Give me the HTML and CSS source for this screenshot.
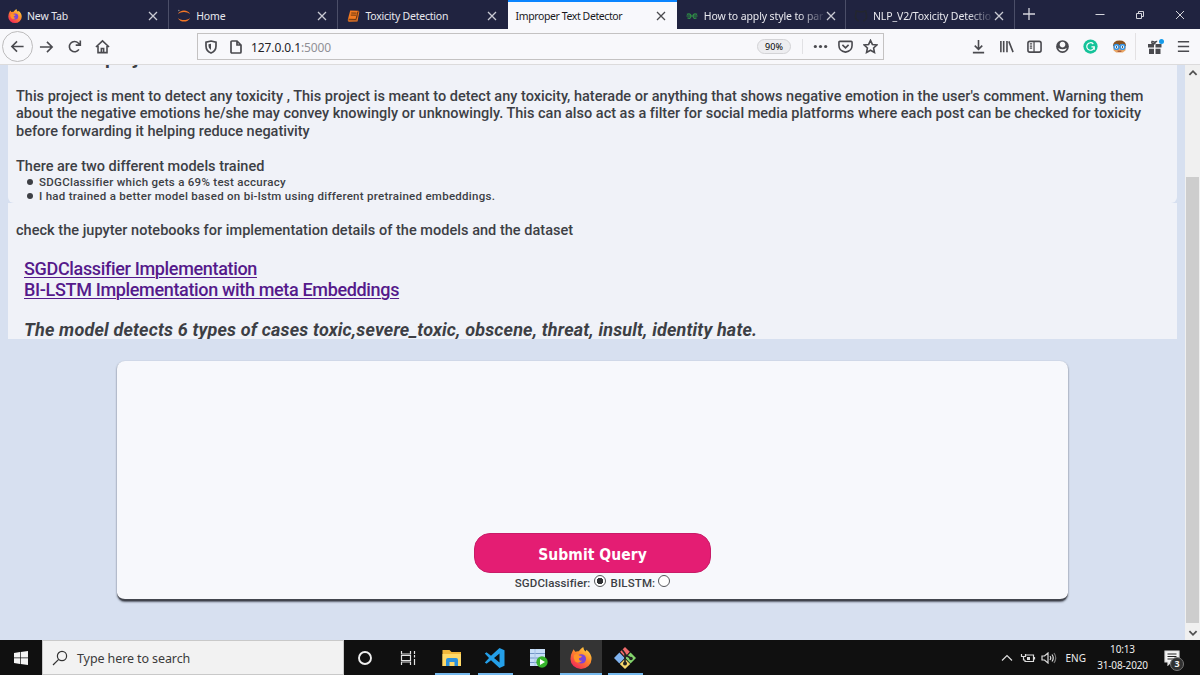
FILE: index.html
```html
<!DOCTYPE html>
<html lang="en">
<head>
<meta charset="utf-8">
<title>Improper Text Detector</title>
<link rel="stylesheet" href="styles.css">
</head>
<body>
<svg class="defs" width="0" height="0">
  <defs>
    <symbol id="close" viewBox="0 0 10 10"><path d="M1 1l8 8M9 1l-8 8" fill="none" stroke="currentColor" stroke-width="1.3"/></symbol>
    <linearGradient id="flame" x1=".9" y1="0" x2=".2" y2="1"><stop offset="0" stop-color="#ffe04a"/><stop offset=".45" stop-color="#ff8a2a"/><stop offset="1" stop-color="#f0205c"/></linearGradient>
    <symbol id="firefox" viewBox="0 0 20 20">
      <path d="M2 4.5L3.2 2l1.6 2.4Q6.2 3.6 8 3.8 9.5 1.7 12 0q.2 2.6 2.3 4l.7-1.6Q19.7 6 19.6 11A9.6 9 0 0 1 .4 11Q.2 7.500 2 4.500z" fill="url(#flame)"/>
      <circle cx="10.300" cy="10.800" r="4.300" fill="#7a45d8"/>
      <path d="M3.500 7.200q3-2 4.800.5l2.600.4q-.4 1.800-2.700 2.100-.5 2.600 3 2.300-4 3.200-6.700.4-1.800-2.200-1-5.700z" fill="#ff9328"/>
    </symbol>
  </defs>
</svg>

<div class="tabs">
  <div class="tab"><svg class="fav" viewBox="0 0 20 20"><use href="#firefox"/></svg><span class="tab-label">New Tab</span><svg class="x"><use href="#close"/></svg></div>
  <div class="tab"><svg class="fav" viewBox="0 0 15 15"><path d="M1 5.400C3 .2 12 .2 14 5.400 10.500 2.500 4.500 2.500 1 5.400zM1 9.600c2 5.200 11 5.200 13 0-3.500 2.900-9.500 2.900-13 0z" fill="#f37726"/><circle cx="2" cy="1.600" r=".7" fill="#999"/></svg><span class="tab-label">Home</span><svg class="x"><use href="#close"/></svg></div>
  <div class="tab"><svg class="fav" viewBox="0 0 15 15"><path d="M4.500 1.500l9 .3-2.200 10.400-9.500-.2z" fill="#f37a20"/><path d="M1.800 12l9.500.2 2.200-10 .8.800-2 10.500-9.500.2z" fill="#f37a20"/><path d="M5.600 4.300l5.600.1M5.100 6.500l5.600.1M2.700 11l8 .2 2-8.500" stroke="#60300f" fill="none"/></svg><span class="tab-label">Toxicity Detection</span><svg class="x"><use href="#close"/></svg></div>
  <div class="tab active"><span class="tab-label">Improper Text Detector</span><svg class="x"><use href="#close"/></svg></div>
  <div class="tab"><svg class="fav" viewBox="0 0 15 15"><path d="M2 5.800q4-1.500 4.500 1.700Q6 11 2.700 9.500M1.500 7.500h12M13 5.800q-4-1.500-4.500 1.700Q9 11 12.300 9.500" fill="none" stroke="#2f8d46" stroke-width="1.300"/></svg><span class="tab-label">How to apply style to par</span><svg class="x"><use href="#close"/></svg></div>
  <div class="tab"><svg class="fav" viewBox="0 0 15 15"><path d="M5 13q-3.500-1.500-3.500-5.500L2.500 2l3 1h4l3-1 1 5.500q0 4-3.500 5.500" fill="none" stroke="#23262f" stroke-width="1.600"/></svg><span class="tab-label">NLP_V2/Toxicity Detectio</span><svg class="x"><use href="#close"/></svg></div>
  <svg class="plus" viewBox="0 0 14 14"><path d="M7 1v12M1 7h12" stroke="#d5d5dc" stroke-width="1.300"/></svg>
  <div class="window-buttons">
    <svg viewBox="0 0 10 10"><path d="M.5 4.500h9" stroke="#d5d5dc"/></svg>
    <svg viewBox="0 0 10 10"><path d="M1.500 3.500h5v5h-5zM3.500 3.500v-2h5v5h-2" fill="none" stroke="#d5d5dc"/></svg>
    <svg viewBox="0 0 10 10"><path d="M1 1l8 8M9 1l-8 8" stroke="#d5d5dc"/></svg>
  </div>
</div>

<div class="toolbar">
  <div class="nav">
    <span class="back"><svg viewBox="0 0 16 16"><path d="M14.500 8H2M7.500 2.500L2 8l5.500 5.500"/></svg></span>
    <svg viewBox="0 0 16 16"><path d="M1 8.500h13M8.500 3L14 8.500 8.500 14"/></svg>
    <svg viewBox="0 0 16 16"><path d="M12.700 11A5.500 5.500 0 1 1 12 4.300L14 6.300M14.200 1.500v5H9.300"/></svg>
    <svg viewBox="0 0 16 16"><path d="M1 8.500L8 2l7 6.500M3.200 7.500v7h9.600v-7M6.800 14v-3.800h2.400V14"/></svg>
  </div>
  <div class="address">
    <svg class="shield" viewBox="0 0 14 14"><path d="M7 1l5 1.200V6q0 5-5 7-5-2-5-7V2.200z"/><path d="M7 3.700V10Q4.500 8.500 4.500 6V4.300z" fill="#4a4a4f" stroke="none"/></svg>
    <svg class="doc" viewBox="0 0 14 14"><path d="M2 2q0-1 1-1h5l4 4v7q0 1-1 1H3q-1 0-1-1zM8 1v4h4"/></svg>
    <span class="url">127.0.0.1<i>:5000</i></span>
    <span class="zoom">90%</span>
    <span class="page-actions">
      <svg viewBox="0 0 16 16"><g fill="#4a4a4f" stroke="none"><circle cx="2.500" cy="8" r="1.700"/><circle cx="8" cy="8" r="1.700"/><circle cx="13.500" cy="8" r="1.700"/></g></svg>
      <svg viewBox="0 0 16 16"><path d="M2 2.500h12q1 0 1 1V7q0 6-7 7-7-1-7-7V3.500q0-1 1-1zM4.700 6.300L8 9.500l3.300-3.200"/></svg>
      <svg viewBox="0 0 16 16"><path d="M8 1.500l2 4.300 4.700.6-3.400 3.200.9 4.700L8 12l-4.200 2.300.9-4.700L1.300 6.400 6 5.800z"/></svg>
    </span>
  </div>
  <div class="tools">
    <svg viewBox="0 0 16 16"><path d="M8 1v9.500M4 7l4 4 4-4M2 14.500h12"/></svg>
    <svg viewBox="0 0 16 16"><path d="M2 2v12M5 2v12M8.500 2v12M10.500 2.500L15 14"/></svg>
    <svg viewBox="0 0 16 16"><rect x="1" y="2.500" width="14" height="11.500" rx="2"/><path d="M7.500 2.500V14M3 5.200h2.500M3 7.500h2.500M3 9.800h2.500" stroke-width="1.300"/></svg>
    <svg viewBox="0 0 16 16"><circle cx="8" cy="8" r="6.800" fill="#4a4a4f" stroke="none"/><path d="M8 3a3 3 0 0 1 2.800 4.200q-.8 1.800-2.800 1.800t-2.800-1.800A3 3 0 0 1 8 3z" fill="#f8f8fa" stroke="none"/><path d="M3.500 9.500q4.500 3 9 0-1 3.500-4.500 3.500t-4.500-3.500z" fill="#f8f8fa" stroke="none"/></svg>
    <svg viewBox="0 0 16 16"><circle cx="8" cy="8" r="7.600" fill="#15c39a" stroke="none"/><path d="M11 5.300a4 4 0 1 0 1 3.200H9M12 8.500v3" stroke="#fff" stroke-width="1.300"/></svg>
    <svg viewBox="0 0 16 16"><g stroke="none"><path d="M1.500 7h13v5l-3 2.500h-7l-3-2.500z" fill="#e9a564"/><path d="M1 7.500Q1 1.500 8 1.500t7 6q-3 0-5-2-4 3-9 2z" fill="#8b521e"/></g><circle cx="4.800" cy="8.500" r="2.600" fill="#d9f0ff" stroke="#3592e3" stroke-width="1.500"/><circle cx="11.200" cy="8.500" r="2.600" fill="#d9f0ff" stroke="#3592e3" stroke-width="1.500"/><path d="M4.300 8.500h1M10.700 8.500h1" stroke="#222"/><path d="M6 13h4" stroke="#8c3528" stroke-width="1"/></svg>
    <div class="gift"><svg viewBox="0 0 17 16"><path d="M1 5h6v3.500H1zM8.500 5h6v3.500h-6zM2 9.800h5V15H2zM8.500 9.800h5V15h-5z" fill="#4a4a4f" stroke="none"/><path d="M7.700 5Q4 5 5 2.500 7.500 2 7.700 5q.3-3 2.500-2.500" stroke-width="1.500"/><circle cx="14.500" cy="2.500" r="2.500" fill="#159bea" stroke="none"/></svg></div>
    <svg viewBox="0 0 16 16"><path d="M2 3h12M2 8h12M2 13h12"/></svg>
  </div>
</div>

<div class="viewport">
  <main class="page">
    <section class="panel about">
      <h4 class="clipped">About the project</h4>
      <p><span class="l1">This project is ment to detect any toxicity , This project is meant to detect any toxicity, haterade or anything that shows negative emotion in the user's comment. Warning them</span><br><span class="l2">about the negative emotions he/she may convey knowingly or unknowingly. This can also act as a filter for social media platforms where each post can be checked for toxicity</span><br><span class="l3">before forwarding it helping reduce negativity</span></p>
      <p class="models">There are two different models trained</p>
      <ul>
        <li>SDGClassifier which gets a 69% test accuracy</li>
        <li>I had trained a better model based on bi-lstm using different pretrained embeddings.</li>
      </ul>
    </section>
    <section class="panel details">
      <p class="check">check the jupyter notebooks for implementation details of the models and the dataset</p>
      <div class="links"><a href="#">SGDClassifier Implementation</a><br><a href="#">BI-LSTM Implementation with meta Embeddings</a></div>
      <p class="cases">The model detects 6 types of cases toxic,severe_toxic, obscene, threat, insult, identity hate.</p>
    </section>
    <form class="card">
      <button type="button">Submit Query</button>
      <div class="choices"><span>SGDClassifier:</span><i class="radio on"></i><span>BILSTM:</span><i class="radio"></i></div>
    </form>
  </main>
  <div class="scrollbar">
    <svg viewBox="0 0 10 10"><path d="M2 6.500L5 3.500l3 3"/></svg>
    <div class="thumb"></div>
    <svg viewBox="0 0 10 10"><path d="M2 3.500l3 3 3-3"/></svg>
  </div>
</div>

<div class="taskbar">
  <div class="start"><svg viewBox="0 0 14 14"><path d="M0 2l6-1v5.600H0zM6.700.9L14 0v6.600H6.700zM0 7.300h6V13l-6-1zM6.700 7.300H14V14l-7.300-1z" fill="#f4f4f4"/></svg></div>
  <div class="search"><svg viewBox="0 0 16 16"><circle cx="10" cy="6" r="4.600"/><path d="M6.700 9.300L1 15"/></svg><span>Type here to search</span></div>
  <div class="apps">
    <div class="app"><svg viewBox="0 0 22 22"><circle cx="11" cy="11" r="6" fill="none" stroke="#eee" stroke-width="1.900"/></svg></div>
    <div class="app"><svg viewBox="0 0 22 22"><path d="M4.500 4v3h9V4M4.500 18v-3h9v3M4.500 8.500h9v5h-9zM17.500 4v3M17.500 12v6M17.500 8v2.500" fill="none" stroke="#e4e4e4" stroke-width="1.200"/></svg></div>
    <div class="app run"><svg viewBox="0 0 22 22"><path d="M1.500 3h7l2 2H20v14H1.500z" fill="#f1b73b"/><path d="M1.500 7H20v12H1.500z" fill="#ffd968"/><path d="M5 19v-6q0-2 2-2h8q2 0 2 2v6h-3.500v-4h-5v4z" fill="#2c91dd"/></svg></div>
    <div class="app run"><svg viewBox="0 0 22 22"><path d="M15.500 1l5 2.200v15.600L15.500 21 7 13.300l-4.500 3.500L.8 15.500 5 11 .8 6.500l1.700-1.300L7 8.700zM15.500 6.500L10 11l5.500 4.500z" fill="#249fe8" fill-rule="evenodd"/></svg></div>
    <div class="app"><svg viewBox="0 0 22 22"><path d="M3 2h15v17H3z" fill="#c7def7"/><path d="M3 6.500h15M3 11h15M3 15.500h15" stroke="#7296c6"/><path d="M8 2v17" stroke="#a5c2e6"/><circle cx="15" cy="15" r="5.700" fill="#35b32b"/><path d="M13 12l5 3-5 3z" fill="#fff"/></svg></div>
    <div class="app run current"><svg viewBox="0 0 20 20"><use href="#firefox"/></svg></div>
    <div class="app run git"><svg viewBox="0 0 22 22"><path d="M11 0l4.800 4.800L11 10 6.200 4.800z" fill="#ee6a6a"/><path d="M5.400 5.500l5.300 5.500-5.300 5.500L0 11z" fill="#80b3ef"/><path d="M16.600 5.500L22 11l-5.400 5.500L11.300 11z" fill="#83d36c"/><path d="M11 12l5.200 5L11 22l-5.200-5z" fill="#f5d66c"/><path d="M8 2.500l3 4v10M11 7.500l5.500 3.500" fill="none" stroke="#222" stroke-width="1.600"/><circle cx="11" cy="16.500" r="2" fill="#222"/><circle cx="17" cy="11.500" r="1.800" fill="#222"/></svg></div>
  </div>
  <div class="tray">
    <svg class="chevron" viewBox="0 0 12 12"><path d="M1 8.500L6 3.500l5 5"/></svg>
    <svg class="battery" viewBox="0 0 16 12"><path d="M6 3h7.500v6.500H5V8M14.500 5v2.500M1.500 2v2.500h4V2M3.500 4.500V8H5"/><path d="M7 5h3v3H7z" fill="#ddd" stroke="none"/></svg>
    <svg class="volume" viewBox="0 0 16 12"><path d="M1 4h2.500L7 1v10L3.500 8H1zM9 4q1.500 2 0 4M11 2.500q2.500 3.500 0 7"/><path d="M13 1q3.500 5 0 10" stroke="#777"/></svg>
    <span class="lang">ENG</span>
    <div class="clock"><span>10:13</span><span>31-08-2020</span></div>
    <div class="notice"><svg viewBox="0 0 16 16"><path d="M1 1h14v11H7l-3 3v-3H1z" fill="#f4f4f4"/><path d="M3.500 4h9M3.500 6.500h9M3.500 9h6" stroke="#222"/></svg><b>3</b></div>
  </div>
</div>
</body>
</html>
```

FILE: styles.css
```css
* { box-sizing: border-box; }
body { margin: 0; width: 1200px; height: 675px; overflow: hidden; display: flex; flex-direction: column; font-family: "Noto Sans", "Open Sans", sans-serif; background: #d7e0f0; }
svg { display: block; flex: none; }
.defs { position: absolute; }

.tabs { height: 29px; flex: none; display: flex; background: #202340; color: #e8e8ee; }
.tab { width: 169.200px; flex: none; display: flex; align-items: center; padding: 2px 10px 0 8px; border-right: 1px solid #4b4e68; }
.tab:nth-child(3) { border-right: 0; padding-right: 11px; }
.tab.active { background: #f8f8fc; color: #18181c; border: 0; border-top: 2px solid #0a84ff; padding-top: 0; padding-right: 11px; }
.fav { width: 14px; height: 14px; margin-right: 5px; }
.tab-label { flex: 1; white-space: nowrap; font-size: 10.500px; letter-spacing: -.12px; margin-right: 3px; }
.tab:nth-child(3) .tab-label { letter-spacing: -.22px; }
.tab.active .tab-label { letter-spacing: -.4px; }
.tab:nth-child(n+5) .tab-label { mask-image: linear-gradient(to right, #000 80%, #0002); }
.x { width: 10px; height: 10px; color: #c9cad3; }
.active .x { color: #4a4a4f; }
.plus { width: 14px; height: 14px; margin: 7px 0 0 7px; }
.window-buttons { margin-left: auto; padding-right: 15px; display: flex; gap: 30px; align-items: center; }
.window-buttons svg { width: 10px; height: 10px; }

.toolbar { height: 36px; flex: none; display: flex; align-items: center; background: #f8f8fb; border-bottom: 1px solid #dcdbdc; }
.toolbar svg { width: 15px; height: 15px; fill: none; stroke: #4a4a4f; stroke-width: 1.700; }
.nav { width: 197px; display: flex; align-items: center; gap: 13px; padding-left: 2px; }
.back { width: 31px; height: 31px; margin-right: -7px; border: 1px solid #bdbcbd; border-radius: 50%; display: flex; align-items: center; justify-content: center; }
.address { width: 687px; height: 27px; border: 1px solid #c4c2c2; display: flex; align-items: center; padding: 0 5px 0 6px; }
.address .shield, .address .doc { width: 14px; height: 14px; }
.address .doc { margin-left: 11px; }
.url { font-size: 12px; color: #222227; margin-left: 8px; letter-spacing: -.1px; padding-top: 1px; }
.url i { font-style: normal; color: #909096; }
.zoom { margin-left: auto; width: 34px; height: 15px; border: 1px solid #d3d3d6; border-radius: 8px; background: #ededf0; font-size: 9px; line-height: 14px; text-align: center; }
.page-actions { display: flex; gap: 10px; margin-left: 11px; padding-left: 10px; border-left: 1px solid #e1e1e4; }
.tools { margin-left: auto; display: flex; align-items: center; gap: 13.200px; padding-right: 9px; }
.gift { height: 27px; width: 35px; margin: 0 -7px 0 -5px; padding-left: 11px; border-left: 1px solid #e3e1e3; display: flex; align-items: center; }
.gift svg { width: 17px; height: 16px; }

.viewport { flex: 1; min-height: 0; display: flex; }
.page { flex: 1; min-width: 0; overflow: hidden; padding: 0 8px; background: #d7e0f0; color: #3d3f45; font-family: Roboto, "Liberation Sans", sans-serif; font-weight: 500; }
.panel { background: #f0f2f8; overflow: hidden; }
.about { height: 138px; border-radius: 0 0 6px 6px; padding: 0 8px; }
.about h4, .about p { margin: 0; font-size: 14.500px; line-height: 17.500px; white-space: nowrap; }
.about .clipped { margin-top: -16px; height: 17.500px; font-size: 19px; letter-spacing: .1px; }
.about .clipped + p { margin-top: 21px; }
.l1 { letter-spacing: .01px; }
.l2, .l3 { letter-spacing: -.008px; }
.about .models { margin-top: 17.500px; }
.about ul { margin: 0; padding: 0 0 0 23px; font-size: 11.500px; line-height: 14px; letter-spacing: .28px; list-style: none; }
.about li { display: flex; align-items: center; }
.about li::before { content: ""; width: 6px; height: 6px; margin: 0 6px 0 -12px; border-radius: 50%; background: #3d3f45; }
.details { height: 136px; padding: 0 8px; }
.details p { white-space: nowrap; margin: 0; }
.details .check { padding-top: 19px; font-size: 14.500px; line-height: 18px; letter-spacing: .03px; }
.links { padding: 19px 0 0 8px; font-size: 18px; line-height: 20.500px; letter-spacing: -.34px; }
.links a { color: #551a8b; text-decoration-thickness: 1px; text-underline-offset: 2px; }
.details .cases { padding: 20px 0 0 8px; font-size: 18px; line-height: 20px; letter-spacing: .165px; font-style: italic; font-weight: 700; }

.card { width: 951px; height: 240px; margin: 22px 0 0 109px; border-radius: 8px; background: #f7f8fc; border-bottom: 2px solid #42454e; box-shadow: 0 1px 2px #555a66; display: flex; flex-direction: column; align-items: center; padding-top: 172px; }
.card button { width: 237px; height: 40px; border: 1px solid #c81c68; border-radius: 16px; background: #e41d73; color: #fff; font: 700 15.500px "DejaVu Sans Condensed", "DejaVu Sans", sans-serif; font-stretch: condensed; letter-spacing: .05px; padding: 3px 0 0; }
.choices { display: flex; align-items: center; height: 19px; font-size: 11.500px; letter-spacing: .13px; }
.radio { width: 12px; height: 12px; border: 1px solid #55565a; border-radius: 50%; margin: -3px 5px 0 3px; background: #fff; }
.radio.on { background: radial-gradient(circle, #2f3034 3px, #fff 3.500px); }
.radio:last-child { margin-right: 0; }

.scrollbar { width: 15px; background: #f0f0f0; display: flex; flex-direction: column; align-items: center; padding: 2px 0 1px; }
.scrollbar svg { width: 12px; height: 12px; fill: none; stroke: #505050; stroke-width: 1.500; }
.thumb { width: 13px; height: 446px; background: #cdcdcd; margin-top: auto; margin-bottom: 4px; }

.taskbar { height: 35px; flex: none; display: flex; background: #101010; color: #eee; }
.start { width: 42px; display: flex; align-items: center; justify-content: center; }
.start svg { width: 14px; height: 14px; }
.search { width: 302px; background: #f2f2f2; border: 1px solid #c9c9c9; color: #3b3b3b; display: flex; align-items: center; padding-left: 9px; gap: 9px; font-size: 12.500px; letter-spacing: -.1px; }
.search svg { width: 16px; height: 16px; fill: none; stroke: #333; stroke-width: 1.200; }
.search span { padding-top: 1px; }
.apps { display: flex; gap: 1.300px; }
.app { width: 42px; display: flex; align-items: center; justify-content: center; }
.app svg { width: 22px; height: 22px; }
.app.run { box-shadow: inset 4px 0 #101010, inset -3px 0 #101010, inset 0 -2px #76b9ed; }
.app.run.current { background: #343434; box-shadow: inset 0 -2px #76b9ed; }
.tray { margin-left: auto; display: flex; align-items: center; padding-right: 20px; }
.tray svg { fill: none; stroke: #ddd; stroke-width: 1.200; }
.chevron { width: 12px; height: 12px; }
.battery { width: 16px; height: 12px; margin-left: 7px; }
.volume { width: 16px; height: 12px; margin-left: 5px; }
.lang { font-size: 10px; margin-left: 9px; }
.clock { width: 53px; margin-left: 10px; display: flex; flex-direction: column; align-items: center; font-size: 10px; line-height: 15.500px; letter-spacing: -.15px; white-space: nowrap; }
.notice { position: relative; margin-left: 15px; }
.notice svg { width: 16px; height: 16px; }
.notice b { position: absolute; left: 6px; top: 7px; width: 14px; height: 14px; border: 1px solid #777; border-radius: 50%; background: #303030; font-size: 9px; line-height: 12px; text-align: center; }
```
